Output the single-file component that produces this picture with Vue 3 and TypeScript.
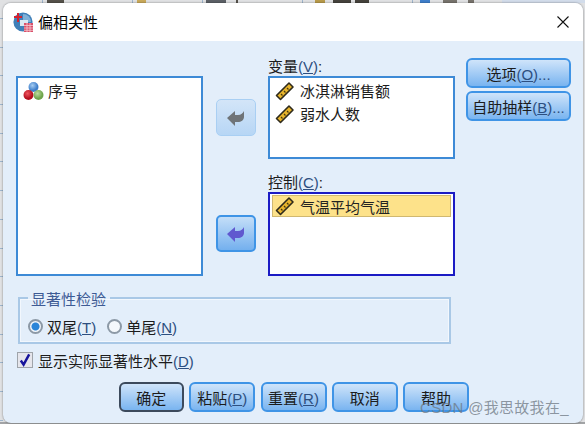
<template>
  <div class="screen">
    <div class="backdrop">
      <span
        v-for="bit in backdropBits"
        :key="bit.left"
        class="backdrop-bit"
        :style="{ left: bit.left + 'px', width: bit.width + 'px', background: bit.color }"
      ></span>
    </div>
    <div class="dialog">
      <header class="titlebar">
        <svg class="app-icon" width="21" height="21" viewBox="0 0 21 21">
          <circle cx="10" cy="10" r="9.6" fill="#3f7fb8" />
          <path d="M10 2a8 8 0 0 1 8 8H10z" fill="#7fb0d8" />
          <rect x="7" y="8" width="8" height="6" fill="#dbe8f3" />
          <path d="M4 1h2v3h3v2H6v4H4V6H1V4h3z" fill="#d3232f" />
          <rect x="11" y="11" width="9" height="9" fill="#d9506a" />
          <path d="M11 13.500h9M11 16h9M11 18.300h9M14 11v9M17 11v9" stroke="#f6c9d2" stroke-width="0.8" />
        </svg>
        <span class="title">偏相关性</span>
        <svg class="close" width="12" height="12" viewBox="0 0 12 12">
          <path d="M0.500 0.500l11 11M11.500 0.500l-11 11" stroke="#111" stroke-width="1.100" />
        </svg>
      </header>

      <div class="content">
        <div class="lists">
          <div class="listbox source">
            <div class="item source-item">
              <svg class="item-icon" width="21" height="20" viewBox="0 0 21 20">
                <defs>
                  <radialGradient id="ball-b" cx="0.4" cy="0.35"><stop offset="0" stop-color="#a6cdf2" /><stop offset="1" stop-color="#3f7fcb" /></radialGradient>
                  <radialGradient id="ball-r" cx="0.4" cy="0.35"><stop offset="0" stop-color="#ee5560" /><stop offset="1" stop-color="#b50f1e" /></radialGradient>
                  <radialGradient id="ball-g" cx="0.4" cy="0.35"><stop offset="0" stop-color="#bcdca0" /><stop offset="1" stop-color="#6fa54c" /></radialGradient>
                </defs>
                <circle cx="10.500" cy="6" r="5" fill="url(#ball-b)" />
                <circle cx="5.500" cy="14" r="5" fill="url(#ball-r)" />
                <circle cx="15.500" cy="14" r="5" fill="url(#ball-g)" />
              </svg>
              <span>序号</span>
            </div>
          </div>

          <div class="arrows">
            <button class="arrow-btn muted">
              <svg width="20" height="18" viewBox="0 0 20 18"><path d="M1 9L9 2v4h3c3 0 5-2 6-4v6c0 3-3 5-6 5H9v4z" fill="#6f7478" /></svg>
            </button>
            <button class="arrow-btn active">
              <svg width="20" height="18" viewBox="0 0 20 18"><path d="M1 9L9 2v4h3c3 0 5-2 6-4v6c0 3-3 5-6 5H9v4z" fill="#6058cf" /></svg>
            </button>
          </div>

          <div class="targets">
            <label class="field-label">变量<span class="mnemonic">(<u>V</u>)</span>:</label>
            <div class="listbox variables">
              <div v-for="name in variables" :key="name" class="item">
                <svg class="item-icon" width="20" height="20" viewBox="0 0 20 20">
                  <path d="M1.500 14.500L14 2l4 4L5.500 18.500z" fill="#e8b52c" stroke="#2e2a1c" stroke-width="1.600" stroke-linejoin="round" />
                  <path d="M6 13l1.500 1.500M9 10l1.500 1.500M12 7l1.500 1.500" stroke="#4a3a10" stroke-width="1.200" />
                </svg>
                <span>{{ name }}</span>
              </div>
            </div>

            <label class="field-label control-label">控制<span class="mnemonic">(<u>C</u>)</span>:</label>
            <div class="listbox controls">
              <div class="item selected">
                <svg class="item-icon" width="20" height="20" viewBox="0 0 20 20">
                  <path d="M1.500 14.500L14 2l4 4L5.500 18.500z" fill="#e8b52c" stroke="#2e2a1c" stroke-width="1.600" stroke-linejoin="round" />
                  <path d="M6 13l1.500 1.500M9 10l1.500 1.500M12 7l1.500 1.500" stroke="#4a3a10" stroke-width="1.200" />
                </svg>
                <span>气温平均气温</span>
              </div>
            </div>
          </div>

          <div class="side-buttons">
            <button class="btn wide">选项<span class="mnemonic">(<u>O</u>)...</span></button>
            <button class="btn wide">自助抽样<span class="mnemonic">(<u>B</u>)...</span></button>
          </div>
        </div>

        <fieldset class="sig-group">
          <legend>显著性检验</legend>
          <div class="radios">
            <span class="radio checked"></span>
            <span class="radio-text">双尾<span class="mnemonic">(<u>T</u>)</span></span>
            <span class="radio"></span>
            <span class="radio-text">单尾<span class="mnemonic">(<u>N</u>)</span></span>
          </div>
        </fieldset>

        <div class="check-row">
          <span class="checkbox">
            <svg width="15" height="15" viewBox="0 0 15 15"><path d="M3 7.500l3 4.500L12 1" fill="none" stroke="#17149c" stroke-width="2.600" /></svg>
          </span>
          <span>显示实际显著性水平<span class="mnemonic">(<u>D</u>)</span></span>
        </div>

        <div class="actions">
          <button class="btn action default">确定</button>
          <button class="btn action">粘贴<span class="mnemonic">(<u>P</u>)</span></button>
          <button class="btn action">重置<span class="mnemonic">(<u>R</u>)</span></button>
          <button class="btn action">取消</button>
          <button class="btn action">帮助</button>
        </div>
      </div>

      <div class="watermark">CSDN @我思故我在_</div>
    </div>
  </div>
</template>

<script setup lang="ts">
interface BackdropBit {
  left: number
  width: number
  color: string
}

const variables: string[] = ['冰淇淋销售额', '弱水人数']

// bits of the window behind that stick out above the dialog
const backdropBits: BackdropBit[] = [
  { left: 42, width: 1, color: '#9db4cc' },
  { left: 47, width: 17, color: '#55514a' },
  { left: 132, width: 1, color: '#9db4cc' },
  { left: 137, width: 9, color: '#c9a95a' },
  { left: 202, width: 1, color: '#9db4cc' },
  { left: 206, width: 20, color: '#5c6066' },
  { left: 236, width: 2, color: '#55514a' },
  { left: 302, width: 1, color: '#9db4cc' },
  { left: 315, width: 10, color: '#b89a4a' },
  { left: 333, width: 18, color: '#45423c' },
  { left: 355, width: 14, color: '#45423c' },
  { left: 412, width: 1, color: '#9db4cc' },
  { left: 420, width: 10, color: '#3f7fcb' },
  { left: 443, width: 14, color: '#77736c' },
  { left: 468, width: 6, color: '#77736c' },
  { left: 502, width: 83, color: '#d2dcea' },
]
</script>

<style>
html,
body {
  margin: 0;
  background: #e2e3e5;
}
</style>

<style scoped>
.screen {
  position: relative;
  width: 585px;
  height: 424px;
  overflow: hidden;
  padding: 3px 0 0 3px;
  box-sizing: border-box;
  font-family: "Liberation Sans", "Noto Sans CJK SC", sans-serif;
  font-size: 15px;
  color: #1c1c1c;
}

.backdrop {
  position: absolute;
  inset: 0;
  background:
    repeating-linear-gradient(transparent 0 18px, #9db4cc 18px 19px, transparent 19px 28.700px) left / 3px 100% no-repeat,
    linear-gradient(#a2a4a6, #a2a4a6) bottom / 100% 2px no-repeat,
    #e0e1e3;
}

.backdrop-bit {
  position: absolute;
  top: 0;
  height: 3px;
}

.dialog {
  position: relative;
  width: 580px;
  height: 420px;
  border-radius: 8px;
  overflow: hidden;
  background: #e3eefa;
  box-shadow: 0 0 2px rgba(0, 0, 0, 0.5);
}

.titlebar {
  box-sizing: border-box;
  height: 38px;
  display: flex;
  align-items: center;
  padding: 0 14px 2px 10px;
  background: #fff;
}

.app-icon {
  margin: 2px 4px 0 0;
}

.title {
  color: #000;
}

.close {
  margin: 2px 0 0 auto;
}

.content {
  padding: 17px 0 0 13px;
}

.lists {
  display: flex;
  align-items: flex-start;
}

.listbox {
  box-sizing: border-box;
  background: #fff;
  border: 2px solid #3d8ad6;
  padding: 1px 2px;
}

.source {
  width: 187px;
  height: 200px;
  margin-top: 18px;
}

.item {
  display: flex;
  align-items: center;
  gap: 5px;
  height: 23px;
  white-space: nowrap;
}

.source-item {
  gap: 4px;
}

.item-icon {
  flex: none;
  margin-left: 3px;
}

.arrows {
  width: 40px;
  margin: 41px 12px 0 13px;
  display: flex;
  flex-direction: column;
  gap: 79px;
}

.arrow-btn {
  box-sizing: border-box;
  width: 40px;
  height: 37px;
  padding: 0;
  display: flex;
  align-items: center;
  justify-content: center;
  border-radius: 5px;
}

.muted {
  background: linear-gradient(#d3e5f8, #b7d6f5);
  border: 1px solid #a9cff3;
}

.active {
  background: linear-gradient(#c4def8, #74b0ee);
  border: 2px solid #3f94e6;
}

.targets {
  width: 187px;
}

.field-label {
  display: block;
  height: 18px;
  line-height: 17px;
  white-space: nowrap;
}

.mnemonic {
  color: #2d4f80;
}

.variables {
  height: 83px;
}

.control-label {
  margin-top: 15px;
}

.controls {
  height: 84px;
  border-color: #1b1bc4;
}

.selected {
  box-sizing: border-box;
  height: 22px;
  background: #fde28a;
  border: 1px solid #d0b870;
  color: #222;
}

.selected .item-icon {
  margin-left: 2px;
}

.side-buttons {
  margin-left: 11px;
  display: flex;
  flex-direction: column;
  gap: 3px;
}

.btn {
  box-sizing: border-box;
  height: 30px;
  padding: 0;
  border: 2px solid #3f94e6;
  border-radius: 6px;
  background: linear-gradient(#cfe4fa, #79b4f0);
  font: inherit;
  color: #1c1c1c;
  white-space: nowrap;
}

.wide {
  width: 105px;
}

.sig-group {
  box-sizing: border-box;
  width: 433px;
  height: 52px;
  margin: 16px 0 0 2px;
  padding: 0 0 0 8px;
  border: 2px solid #a9c8e6;
  box-shadow: inset 0 0 0 1px #f2f7fd;
}

.sig-group legend {
  height: 12px;
  padding: 0 4px 0 3px;
  color: #3d5a94;
  line-height: 16px;
}

.radios {
  display: flex;
  align-items: center;
  margin-top: 12px;
}

.radio {
  box-sizing: border-box;
  width: 15px;
  height: 15px;
  border-radius: 50%;
  border: 2px solid #8c99a6;
  background: #f4f8fc;
}

.radio.checked {
  background: radial-gradient(circle, #2b85d8 0 3.500px, #f0f5fb 4.500px);
}

.radio-text {
  margin: 0 11px 0 4px;
}

.check-row {
  display: flex;
  align-items: center;
  gap: 5px;
  margin: 6px 0 0 1px;
  height: 20px;
}

.checkbox {
  box-sizing: border-box;
  width: 16px;
  height: 16px;
  border: 1px solid #9fa4aa;
  background: #e6e6ec;
  display: flex;
  align-items: center;
  justify-content: center;
}

.actions {
  display: flex;
  gap: 5.250px;
  margin: 12px 0 0 102.500px;
}

.action {
  width: 66px;
}

.default {
  width: 65.500px;
  border-color: #3c4a5c;
}

.watermark {
  position: absolute;
  left: 417px;
  top: 393px;
  font-size: 15px;
  letter-spacing: 0.3px;
  color: rgba(110, 120, 130, 0.75);
  white-space: nowrap;
}
</style>
